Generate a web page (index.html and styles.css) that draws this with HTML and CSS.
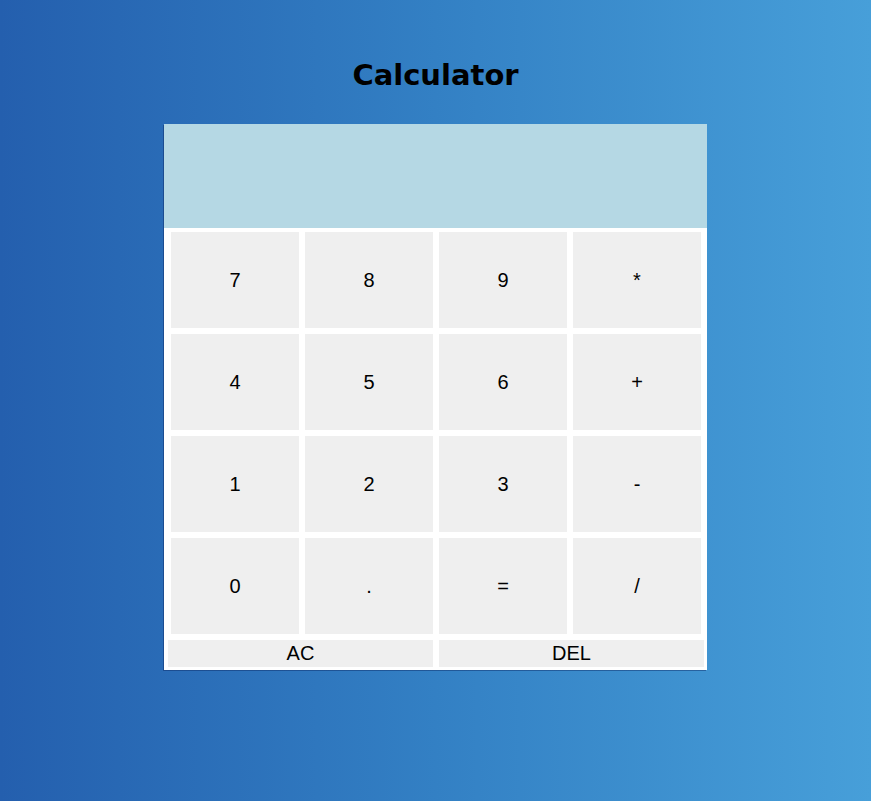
FILE: index.html
```html
<!DOCTYPE html>
<html lang="en">
<head>
<meta charset="utf-8">
<title>Calculator</title>
<link rel="stylesheet" href="styles.css">
</head>
<body>
<main class="page">
  <h1 class="title">Calculator</h1>
  <section class="calc">
    <div class="display"></div>
    <div class="keys">
      <button class="key">7</button>
      <button class="key">8</button>
      <button class="key">9</button>
      <button class="key">*</button>
      <button class="key">4</button>
      <button class="key">5</button>
      <button class="key">6</button>
      <button class="key">+</button>
      <button class="key">1</button>
      <button class="key">2</button>
      <button class="key">3</button>
      <button class="key">-</button>
      <button class="key">0</button>
      <button class="key">.</button>
      <button class="key">=</button>
      <button class="key">/</button>
    </div>
    <div class="actions">
      <button class="action">AC</button>
      <button class="action">DEL</button>
    </div>
  </section>
</main>
</body>
</html>
```

FILE: styles.css
```css
html, body {
  margin: 0;
  padding: 0;
}

body {
  height: 801px;
  background: linear-gradient(to right, #245fae 0%, #3380c4 50%, #479fd9 100%);
  font-family: "Liberation Sans", Arial, sans-serif;
}

.page {
  display: flex;
  flex-direction: column;
  align-items: center;
  padding-top: 57px;
}

.title {
  margin: 0 0 31px;
  font-family: "DejaVu Sans", Verdana, sans-serif;
  font-weight: bold;
  font-size: 29px;
  line-height: 36px;
  color: #000;
}

.calc {
  width: 543px;
  background: #fff;
  box-shadow: -1px 1px 0 rgba(10, 40, 100, 0.45);
}

.display {
  height: 104px;
  background: #b5d8e4;
}

.keys {
  display: grid;
  grid-template-columns: repeat(4, 128px);
  grid-auto-rows: 96px;
  gap: 6px;
  padding: 4px 6px 0 7px;
}

.key,
.action {
  border: none;
  margin: 0;
  padding: 0;
  background: #efefef;
  color: #000;
  font-family: "Liberation Sans", Arial, sans-serif;
  font-size: 20px;
}

.actions {
  display: grid;
  grid-template-columns: 265px 265px;
  gap: 6px;
  padding: 6px 3px 3px 4px;
}

.action {
  height: 27px;
  line-height: 27px;
}
```
